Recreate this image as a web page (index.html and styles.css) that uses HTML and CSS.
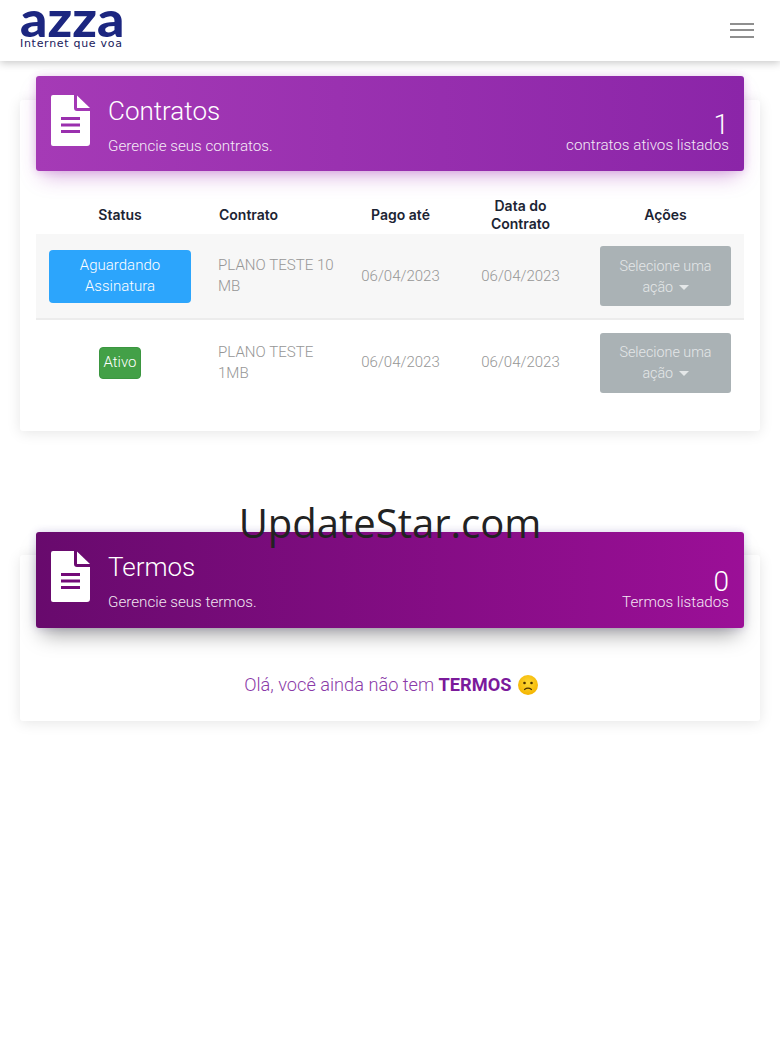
FILE: index.html
```html
<!DOCTYPE html>
<html lang="pt-BR">
<head>
<meta charset="utf-8">
<title>Contratos</title>
<link rel="stylesheet" href="styles.css">
</head>
<body>
<header class="topbar">
  <div class="logo">
    <span class="logo-mark">azza</span>
    <span class="logo-tag">Internet que voa</span>
  </div>
  <button class="menu" aria-label="Menu"><i></i><i></i><i></i></button>
</header>
<main class="page">
  <section class="card card-contracts">
    <div class="banner banner-light">
      <svg class="doc" viewBox="0 0 39 51"><path fill="#fff" d="M2 0H23V13a3 3 0 0 0 3 3H39V48a3 3 0 0 1-3 3H2a2 2 0 0 1-2-2V2a2 2 0 0 1 2-2Z"/><path fill="#fff" d="M26 0.5 39 13H26Z"/><path fill="#9a30ae" d="M10 22H29V25H10ZM10 28.500H29V31.500H10ZM10 35H29V38H10Z"/></svg>
      <div class="banner-text">
        <h2>Contratos</h2>
        <p>Gerencie seus contratos.</p>
      </div>
      <div class="banner-count">
        <strong>1</strong>
        <span>contratos ativos listados</span>
      </div>
    </div>
    <table class="contracts">
      <colgroup><col class="c1"><col class="c2"><col class="c3"><col class="c4"><col class="c5"></colgroup>
      <thead>
        <tr><th>Status</th><th class="th-left">Contrato</th><th>Pago até</th><th>Data do<br>Contrato</th><th>Ações</th></tr>
      </thead>
      <tbody>
        <tr class="striped">
          <td><span class="badge badge-blue">Aguardando Assinatura</span></td>
          <td class="plan">PLANO TESTE 10 MB</td>
          <td>06/04/2023</td>
          <td>06/04/2023</td>
          <td><button class="action">Selecione uma ação <i class="caret"></i></button></td>
        </tr>
        <tr>
          <td><span class="badge badge-green">Ativo</span></td>
          <td class="plan">PLANO TESTE 1MB</td>
          <td>06/04/2023</td>
          <td>06/04/2023</td>
          <td><button class="action">Selecione uma ação <i class="caret"></i></button></td>
        </tr>
      </tbody>
    </table>
  </section>
  <section class="card card-terms">
    <div class="banner banner-dark">
      <svg class="doc" viewBox="0 0 39 51"><path fill="#fff" d="M2 0H23V13a3 3 0 0 0 3 3H39V48a3 3 0 0 1-3 3H2a2 2 0 0 1-2-2V2a2 2 0 0 1 2-2Z"/><path fill="#fff" d="M26 0.5 39 13H26Z"/><path fill="#730a78" d="M10 22H29V25H10ZM10 28.500H29V31.500H10ZM10 35H29V38H10Z"/></svg>
      <div class="banner-text">
        <h2>Termos</h2>
        <p>Gerencie seus termos.</p>
      </div>
      <div class="banner-count">
        <strong>0</strong>
        <span>Termos listados</span>
      </div>
    </div>
    <p class="empty">Olá, você ainda não tem <b>TERMOS</b>
      <svg class="sad" viewBox="0 0 20 20"><defs><radialGradient id="face" cx="50%" cy="40%" r="60%"><stop offset="0" stop-color="#fdd835"/><stop offset="1" stop-color="#f4b400"/></radialGradient></defs><circle cx="10" cy="10" r="10" fill="url(#face)"/><circle cx="6.500" cy="8" r="1.300" fill="#4a3000"/><circle cx="13.500" cy="8" r="1.300" fill="#4a3000"/><path d="M6.500 14.500Q10 11.800 13.500 14.500" fill="none" stroke="#4a3000" stroke-width="1.200" stroke-linecap="round"/></svg>
    </p>
  </section>
</main>
<div class="watermark">UpdateStar.com</div>
</body>
</html>
```
FILE: styles.css
```css
* { box-sizing: border-box; }
html, body { margin: 0; padding: 0; }
body {
  width: 780px;
  height: 1040px;
  background: #fff;
  font-family: Roboto, "Liberation Sans", sans-serif;
  font-weight: 300;
  overflow: hidden;
  position: relative;
}
.topbar {
  height: 61px;
  background: #fff;
  box-shadow: 0 2px 8px rgba(0,0,0,.22);
  display: flex;
  align-items: center;
  justify-content: space-between;
  padding: 0 26px 0 20px;
  position: relative;
  z-index: 2;
}
.logo { display: flex; flex-direction: column; align-self: flex-start; padding-top: 1px; width: 103px; color: #1c2680; }
.logo-mark {
  font-family: Lato, sans-serif;
  font-weight: 900;
  font-size: 50px;
  line-height: 34px;
  white-space: nowrap;
  transform: scaleX(1.07);
  transform-origin: left center;
}
.logo-tag {
  font-family: "DejaVu Sans", sans-serif;
  font-weight: 400;
  font-size: 11px;
  line-height: 12px;
  letter-spacing: .7px;
  margin-top: 3px;
  white-space: nowrap;
  color: #18205c;
}
.menu { width: 24px; height: 15px; padding: 0; border: 0; background: none; display: flex; flex-direction: column; justify-content: space-between; margin-top: -1px; }
.menu i { display: block; height: 2px; background: #8f8f8f; }
.page { padding: 39px 20px 0; }
.card {
  background: #fff;
  border-radius: 3px;
  box-shadow: 0 2px 14px rgba(0,0,0,.1);
  padding: 0 16px;
}
.card-contracts { height: 331px; }
.card-terms { height: 166px; margin-top: 124px; }
.banner {
  height: 95px;
  border-radius: 3px;
  display: flex;
  align-items: flex-start;
  color: #fff;
  padding: 19px 15px 0;
  position: relative;
  top: -24px;
}
.banner-light {
  background: linear-gradient(90deg, #a53ab6, #8b25a8);
  box-shadow: 0 10px 20px -6px rgba(156,39,176,.4), 0 0 8px rgba(156,39,176,.2);
}
.banner-dark {
  height: 96px;
  top: -23px;
  background: linear-gradient(90deg, #680a6d, #9b0f97);
  box-shadow: 0 12px 20px -6px rgba(0,0,0,.38), 0 0 8px rgba(70,40,160,.2);
}
.doc { width: 39px; height: 51px; flex: none; }
.banner-text { margin-left: 18px; flex: 1; }
.banner-text h2 { margin: 0; font-weight: 300; font-size: 26px; line-height: 32px; }
.banner-text p { margin: 9px 0 0; font-size: 15.200px; line-height: 20px; opacity: .9; font-weight: 300; }
.banner-count { align-self: flex-end; display: flex; flex-direction: column; align-items: flex-end; padding-bottom: 16px; }
.banner-count strong { font-weight: 300; font-size: 28px; line-height: 20px; }
.banner-count span { font-size: 15.200px; line-height: 20px; opacity: .9; }
.contracts {
  width: 708px;
  table-layout: fixed;
  border-collapse: collapse;
  margin-top: -1px;
  text-align: center;
}
.c1 { width: 168px; }
.c2 { width: 143px; }
.c3 { width: 107px; }
.c4 { width: 133px; }
.c5 { width: 157px; }
.contracts th {
  font-family: Inter, sans-serif;
  font-weight: 600;
  font-size: 14px;
  line-height: 18px;
  color: #1c2433;
  padding: 1px 0 0;
  height: 40px;
  vertical-align: middle;
}
.contracts th.th-left { text-align: left; padding-left: 15px; }
.contracts td {
  font-size: 15px;
  line-height: 21px;
  color: #969696;
  padding: 0;
  vertical-align: middle;
}
.contracts tbody tr { height: 86px; }
.contracts .striped { background: #f7f7f7; border-bottom: 2px solid #ececec; height: 85px; }
.contracts td.plan { text-align: left; padding: 0 8px 0 14px; font-size: 15.100px; }
.badge { display: inline-block; color: #fff; border-radius: 4px; }
.badge-blue { background: #2ca5fc; width: 142px; padding: 5px 20px 6px; }
.badge-green { background: #43a047; padding: 4px 4px 5px; border: 1px solid #3b9640; }
.action {
  width: 131px;
  height: 60px;
  background: #aab2b5;
  border: 0;
  border-radius: 3px;
  color: #e4e7e8;
  font: 300 14.300px/21px Roboto, sans-serif;
  padding: 1px 16px 0;
  vertical-align: middle;
}
.caret {
  display: inline-block;
  width: 0;
  height: 0;
  margin-left: 2px;
  vertical-align: 2px;
  border-top: 5px solid #e4e7e8;
  border-left: 5px solid transparent;
  border-right: 5px solid transparent;
}
.empty {
  margin: 0;
  text-align: center;
  font-size: 18.200px;
  line-height: 24px;
  color: #8a3aa8;
  padding: 22px 0 0 2px;
}
.empty b { font-weight: 700; color: #7b1a9b; }
.sad { width: 20px; height: 20px; vertical-align: -4px; margin-left: 2px; }
.watermark {
  position: absolute;
  left: 0;
  width: 780px;
  top: 495px;
  text-align: center;
  font-family: "Open Sans", sans-serif;
  font-weight: 400;
  font-size: 40px;
  line-height: 56px;
  color: #222;
  z-index: 3;
}
```
